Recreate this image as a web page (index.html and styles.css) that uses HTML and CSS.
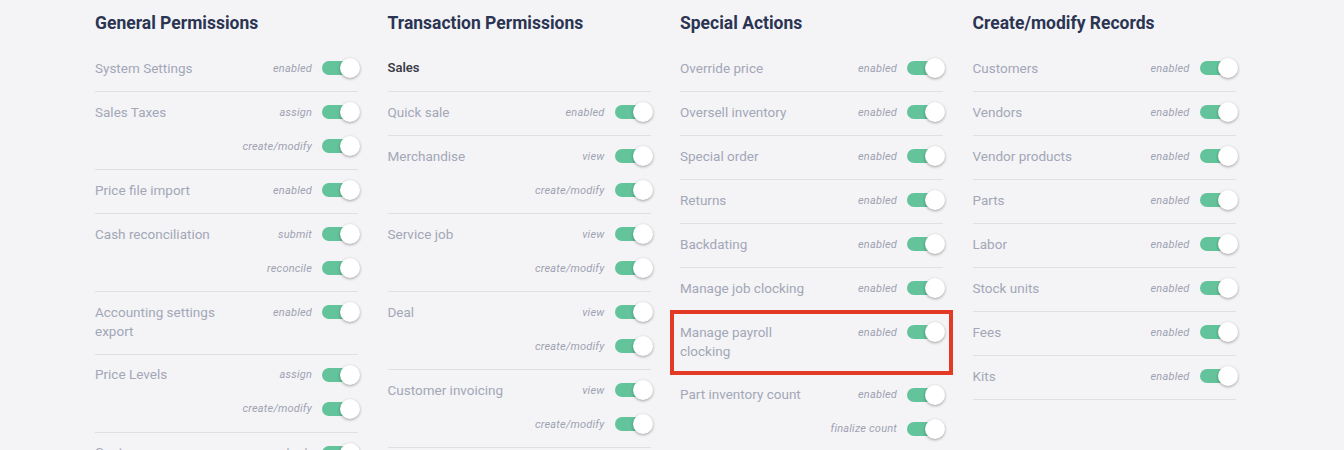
FILE: index.html
```html
<!DOCTYPE html>
<html lang="en">
<head>
  <meta charset="UTF-8" />
  <title>Role Permissions</title>
  <link rel="stylesheet" href="styles.css">
</head>
<body>

  <div class="columns">

    <!-- General -->
    <section class="group">
      <h2>General Permissions</h2>
      <div class="perm">
        <div class="perm-name">System Settings</div>
        <div class="perm-ctls">
          <div class="ctl"><span class="ctl-label">enabled</span><span class="toggle"></span></div>
        </div>
      </div>
      <div class="perm">
        <div class="perm-name">Sales Taxes</div>
        <div class="perm-ctls">
          <div class="ctl"><span class="ctl-label">assign</span><span class="toggle"></span></div>
          <div class="ctl"><span class="ctl-label">create/modify</span><span class="toggle"></span></div>
        </div>
      </div>
      <div class="perm">
        <div class="perm-name">Price file import</div>
        <div class="perm-ctls">
          <div class="ctl"><span class="ctl-label">enabled</span><span class="toggle"></span></div>
        </div>
      </div>
      <div class="perm">
        <div class="perm-name">Cash reconciliation</div>
        <div class="perm-ctls">
          <div class="ctl"><span class="ctl-label">submit</span><span class="toggle"></span></div>
          <div class="ctl"><span class="ctl-label">reconcile</span><span class="toggle"></span></div>
        </div>
      </div>
      <div class="perm">
        <div class="perm-name">Accounting settings export</div>
        <div class="perm-ctls">
          <div class="ctl"><span class="ctl-label">enabled</span><span class="toggle"></span></div>
        </div>
      </div>
      <div class="perm">
        <div class="perm-name">Price Levels</div>
        <div class="perm-ctls">
          <div class="ctl"><span class="ctl-label">assign</span><span class="toggle"></span></div>
          <div class="ctl"><span class="ctl-label">create/modify</span><span class="toggle"></span></div>
        </div>
      </div>
      <div class="perm">
        <div class="perm-name">Costs</div>
        <div class="perm-ctls">
          <div class="ctl"><span class="ctl-label">read only</span><span class="toggle"></span></div>
        </div>
      </div>
    </section>

    <!-- Transactions -->
    <section class="group">
      <h2>Transaction Permissions</h2>
      <div class="perm subhead">
        <div class="perm-name">Sales</div>
      </div>
      <div class="perm">
        <div class="perm-name">Quick sale</div>
        <div class="perm-ctls">
          <div class="ctl"><span class="ctl-label">enabled</span><span class="toggle"></span></div>
        </div>
      </div>
      <div class="perm">
        <div class="perm-name">Merchandise</div>
        <div class="perm-ctls">
          <div class="ctl"><span class="ctl-label">view</span><span class="toggle"></span></div>
          <div class="ctl"><span class="ctl-label">create/modify</span><span class="toggle"></span></div>
        </div>
      </div>
      <div class="perm">
        <div class="perm-name">Service job</div>
        <div class="perm-ctls">
          <div class="ctl"><span class="ctl-label">view</span><span class="toggle"></span></div>
          <div class="ctl"><span class="ctl-label">create/modify</span><span class="toggle"></span></div>
        </div>
      </div>
      <div class="perm">
        <div class="perm-name">Deal</div>
        <div class="perm-ctls">
          <div class="ctl"><span class="ctl-label">view</span><span class="toggle"></span></div>
          <div class="ctl"><span class="ctl-label">create/modify</span><span class="toggle"></span></div>
        </div>
      </div>
      <div class="perm">
        <div class="perm-name">Customer invoicing</div>
        <div class="perm-ctls">
          <div class="ctl"><span class="ctl-label">view</span><span class="toggle"></span></div>
          <div class="ctl"><span class="ctl-label">create/modify</span><span class="toggle"></span></div>
        </div>
      </div>
    </section>

    <!-- Special actions -->
    <section class="group">
      <h2>Special Actions</h2>
      <div class="perm">
        <div class="perm-name">Override price</div>
        <div class="perm-ctls">
          <div class="ctl"><span class="ctl-label">enabled</span><span class="toggle"></span></div>
        </div>
      </div>
      <div class="perm">
        <div class="perm-name">Oversell inventory</div>
        <div class="perm-ctls">
          <div class="ctl"><span class="ctl-label">enabled</span><span class="toggle"></span></div>
        </div>
      </div>
      <div class="perm">
        <div class="perm-name">Special order</div>
        <div class="perm-ctls">
          <div class="ctl"><span class="ctl-label">enabled</span><span class="toggle"></span></div>
        </div>
      </div>
      <div class="perm">
        <div class="perm-name">Returns</div>
        <div class="perm-ctls">
          <div class="ctl"><span class="ctl-label">enabled</span><span class="toggle"></span></div>
        </div>
      </div>
      <div class="perm">
        <div class="perm-name">Backdating</div>
        <div class="perm-ctls">
          <div class="ctl"><span class="ctl-label">enabled</span><span class="toggle"></span></div>
        </div>
      </div>
      <div class="perm">
        <div class="perm-name">Manage job clocking</div>
        <div class="perm-ctls">
          <div class="ctl"><span class="ctl-label">enabled</span><span class="toggle"></span></div>
        </div>
      </div>
      <!-- highlighted row -->
      <div class="perm marked">
        <div class="perm-name">Manage payroll clocking</div>
        <div class="perm-ctls">
          <div class="ctl"><span class="ctl-label">enabled</span><span class="toggle"></span></div>
        </div>
      </div>
      <div class="perm">
        <div class="perm-name">Part inventory count</div>
        <div class="perm-ctls">
          <div class="ctl"><span class="ctl-label">enabled</span><span class="toggle"></span></div>
          <div class="ctl"><span class="ctl-label">finalize count</span><span class="toggle"></span></div>
        </div>
      </div>
    </section>

    <!-- Records -->
    <section class="group">
      <h2>Create/modify Records</h2>
      <div class="perm">
        <div class="perm-name">Customers</div>
        <div class="perm-ctls">
          <div class="ctl"><span class="ctl-label">enabled</span><span class="toggle"></span></div>
        </div>
      </div>
      <div class="perm">
        <div class="perm-name">Vendors</div>
        <div class="perm-ctls">
          <div class="ctl"><span class="ctl-label">enabled</span><span class="toggle"></span></div>
        </div>
      </div>
      <div class="perm">
        <div class="perm-name">Vendor products</div>
        <div class="perm-ctls">
          <div class="ctl"><span class="ctl-label">enabled</span><span class="toggle"></span></div>
        </div>
      </div>
      <div class="perm">
        <div class="perm-name">Parts</div>
        <div class="perm-ctls">
          <div class="ctl"><span class="ctl-label">enabled</span><span class="toggle"></span></div>
        </div>
      </div>
      <div class="perm">
        <div class="perm-name">Labor</div>
        <div class="perm-ctls">
          <div class="ctl"><span class="ctl-label">enabled</span><span class="toggle"></span></div>
        </div>
      </div>
      <div class="perm">
        <div class="perm-name">Stock units</div>
        <div class="perm-ctls">
          <div class="ctl"><span class="ctl-label">enabled</span><span class="toggle"></span></div>
        </div>
      </div>
      <div class="perm">
        <div class="perm-name">Fees</div>
        <div class="perm-ctls">
          <div class="ctl"><span class="ctl-label">enabled</span><span class="toggle"></span></div>
        </div>
      </div>
      <div class="perm">
        <div class="perm-name">Kits</div>
        <div class="perm-ctls">
          <div class="ctl"><span class="ctl-label">enabled</span><span class="toggle"></span></div>
        </div>
      </div>
    </section>

  </div>

</body>
</html>
```

FILE: styles.css
```css
/* Permissions page, four columns of toggles */
body {
  margin: 0;
  background-color: #f4f4f7;
  font-family: Roboto, "Liberation Sans", Arial, sans-serif;
  color: #a3a7b6;
  overflow: hidden;
}

.columns {
  display: grid;
  grid-template-columns: repeat(4, 263px);
  column-gap: 29.5px;
  padding: 12px 0 0 95px;
  align-items: start;
}

h2 {
  margin: 0 0 14px;
  font-size: 17.5px;
  line-height: 22px;
  font-weight: 700;
  color: #2b3452;
}

/* One permission row: 44px tall with one switch */
.perm {
  position: relative;
  display: flex;
  justify-content: space-between;
  align-items: flex-start;
  padding: 10px 0 13px;
  border-bottom: 1px solid #dfdfe5;
}

.perm-name {
  flex: 0 0 50%;
  font-size: 13.5px;
  line-height: 19px;
  padding-top: 0.5px;
}

.subhead .perm-name {
  color: #3b3e49;
  font-weight: 600;
  font-size: 13px;
  line-height: 20px;
  padding-top: 0;
}

.perm-ctls {
  display: flex;
  flex-direction: column;
  align-items: flex-end;
  gap: 14px;
}

.ctl {
  display: flex;
  align-items: center;
  height: 20px;
}

.ctl-label {
  font-size: 11px;
  font-style: italic;
  color: #9ea2b1;
  margin-right: 10px;
  letter-spacing: 0.2px;
}

/* Switch, always on in this view */
.toggle {
  position: relative;
  width: 36px;
  height: 20px;
}

.toggle::before {
  content: "";
  position: absolute;
  left: 0;
  top: 3px;
  width: 34px;
  height: 14px;
  border-radius: 7px;
  background-color: #63c39b;
}

.toggle::after {
  content: "";
  position: absolute;
  right: -2px;
  top: 0;
  width: 20px;
  height: 20px;
  border-radius: 50%;
  background: #fff;
  box-shadow: 0 1px 3px rgba(0,0,0,0.35);
}

/* Red callout box round one row */
.marked::after {
  content: "";
  position: absolute;
  top: -2px;
  bottom: -1px;
  left: -10px;
  right: -10px;
  border: 4px solid #e23a24;
  pointer-events: none;
}
```
